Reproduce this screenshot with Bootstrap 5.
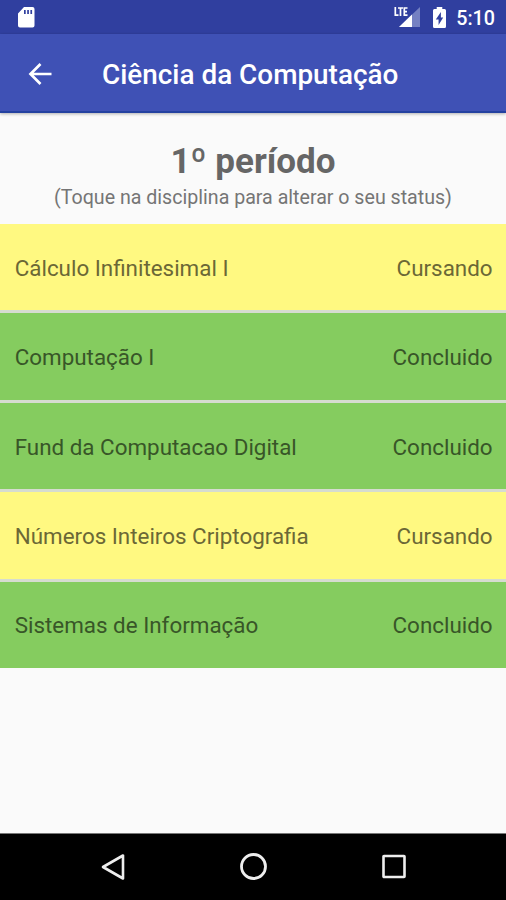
<!DOCTYPE html>
<html lang="pt-BR">
<head>
<meta charset="utf-8">
<meta name="viewport" content="width=device-width, initial-scale=1">
<title>Ciência da Computação</title>
<link rel="stylesheet" href="https://cdn.jsdelivr.net/npm/bootstrap@5.3.0/dist/css/bootstrap.min.css">
<style>
body { font-family: Roboto, "Liberation Sans", sans-serif; background: #fafafa; height: 900px; }
svg { display: block; flex: none; }
.status-strip { height: 34px; background: #303f9f; padding: 1px 11px 0 18px; }
.battery { margin-left: 12px; }
.clock { font-size: 19.7px; font-weight: 500; line-height: 30px; margin-left: 10px; padding-top: 3px; }
.app-header { height: 79px; background: #3f51b5; border-bottom: 2px solid #2441a0; box-shadow: 0 1px 3px rgba(0,0,0,.3); padding: 3px 0 0 28px; }
.app-title { font-size: 27.9px; font-weight: 500; line-height: 34px; margin: 2px 0 0 49px; white-space: nowrap; }
.period { height: 111px; padding-top: 29px; color: #757575; }
.period-name { font-size: 35px; font-weight: 700; line-height: 40px; color: #666; }
.period-hint { font-size: 19.62px; line-height: 24px; margin-top: 4px; white-space: nowrap; }
.subjects { gap: 3.4px; background: #d6dcd0; }
.subject { height: 86.1px; font-size: 22.4px; line-height: 28px; padding: 1px 13.4px 0 14.7px; white-space: nowrap; }
.studying { background: #fff981; color: #6b6836; }
.done { background: #85cc5f; color: #385628; }
.system-nav { height: 67px; background: #000; border-top: 1px solid #777; padding: 0 97px 0 98px; }
</style>
</head>
<body class="d-flex flex-column overflow-hidden">
<header class="text-white">
  <div class="status-strip d-flex align-items-center">
    <svg width="17" height="21" viewBox="0 0 17 21"><path fill="#fff" fill-rule="evenodd" d="M6 0h8.500Q16.500 0 16.500 2v16.500q0 2-2 2H2q-2 0-2-2V6.500ZM6 3v4h1.700V3ZM9.200 3v4h1.700V3ZM12.400 3v4h1.700V3Z"/></svg>
    <svg class="ms-auto" width="27" height="21" viewBox="0 0 27 21">
      <path fill="#7480c2" d="M26 0V20H5Z"/>
      <path fill="#303f9f" d="M0 0H15V10H0Z"/>
      <path fill="#fff" d="M18 7.500V20H5Z"/>
      <path fill="none" stroke="#fff" stroke-width="1.700" d="M1.300 0V8.200H4.500M4 1H9M6.500 1V9M13.500 1H10.300V8.200H13.500M10.300 4.600H13"/>
    </svg>
    <svg class="battery" width="13" height="22" viewBox="0 0 14 22" preserveAspectRatio="none"><path fill="#fff" fill-rule="evenodd" d="M4 0h6v2h2.500Q14 2 14 3.500v16Q14 21 12.500 21h-11Q0 21 0 19.500v-16Q0 2 1.500 2H4ZM8.500 5 3 12.500h3V18l5-7.500H8.500Z"/></svg>
    <span class="clock">5:10</span>
  </div>
  <div class="app-header d-flex align-items-center">
    <svg width="25" height="24" viewBox="0 0 25 24"><path fill="none" stroke="#fff" stroke-width="2.700" d="M23.500 12H2.500M12.500 2 2.500 12 12.500 22"/></svg>
    <h1 class="app-title">Ciência da Computação</h1>
  </div>
</header>
<main class="flex-grow-1">
  <div class="period text-center">
    <h2 class="period-name mb-0">1º período</h2>
    <p class="period-hint mb-0">(Toque na disciplina para alterar o seu status)</p>
  </div>
  <div class="subjects d-flex flex-column">
    <div class="subject studying d-flex align-items-center justify-content-between"><span>Cálculo Infinitesimal I</span><span>Cursando</span></div>
    <div class="subject done d-flex align-items-center justify-content-between"><span>Computação I</span><span>Concluido</span></div>
    <div class="subject done d-flex align-items-center justify-content-between"><span>Fund da Computacao Digital</span><span>Concluido</span></div>
    <div class="subject studying d-flex align-items-center justify-content-between"><span>Números Inteiros Criptografia</span><span>Cursando</span></div>
    <div class="subject done d-flex align-items-center justify-content-between"><span>Sistemas de Informação</span><span>Concluido</span></div>
  </div>
</main>
<nav class="system-nav d-flex align-items-center justify-content-between">
  <svg width="30" height="30" viewBox="0 0 30 30"><path fill="none" stroke="#eee" stroke-width="2.600" stroke-linejoin="round" d="M25 3.500V26.500L5 15Z"/></svg>
  <svg width="30" height="30" viewBox="0 0 30 30"><circle cx="14.500" cy="14.500" r="12" fill="none" stroke="#eee" stroke-width="2.800"/></svg>
  <svg width="30" height="30" viewBox="0 0 30 30"><rect x="4.500" y="4" width="21" height="21" rx=".5" fill="none" stroke="#eee" stroke-width="2.600"/></svg>
</nav>
<script src="https://cdn.jsdelivr.net/npm/bootstrap@5.3.0/dist/js/bootstrap.bundle.min.js"></script>
</body>
</html>
